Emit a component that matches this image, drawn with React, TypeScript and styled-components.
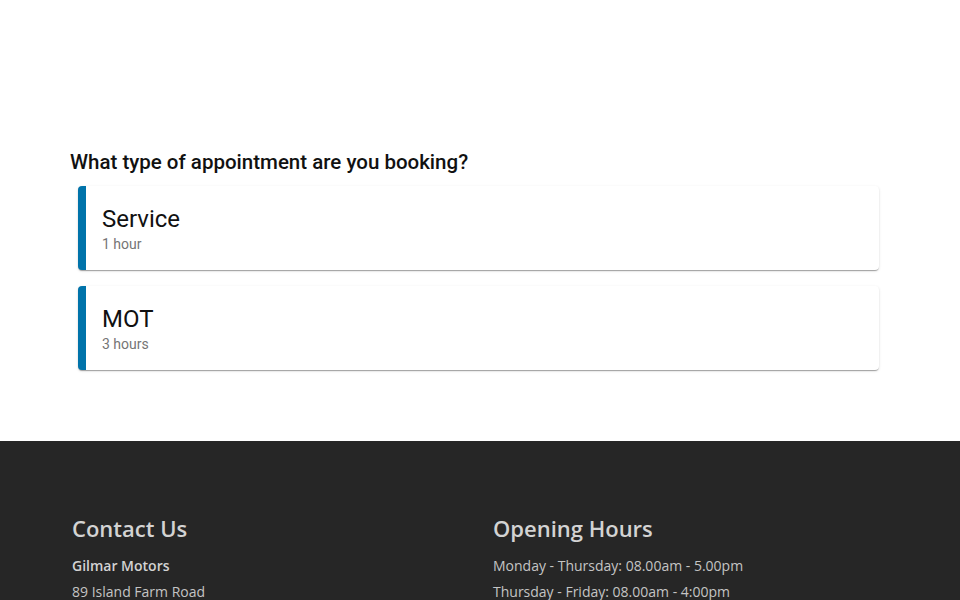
import React from "react";
import styled, { createGlobalStyle } from "styled-components";

const Global = createGlobalStyle`
  html, body { margin: 0; padding: 0; background: #fff; }
  body { font-family: Roboto, "Liberation Sans", sans-serif; }
  * { box-sizing: border-box; }
`;

const Page = styled.div`
  display: flex;
  flex-direction: column;
  height: 600px;
  overflow: hidden;
`;

const Main = styled.main`
  padding: 150px 81px 71px 70px;
`;

const Question = styled.h2`
  margin: 0 0 12px;
  font-family: Roboto, "Liberation Sans", sans-serif;
  font-weight: 500;
  font-size: 20.5px;
  line-height: 24px;
  color: #111;
`;

const List = styled.div`
  display: flex;
  flex-direction: column;
  gap: 16px;
  padding-left: 8px;
`;

const Card = styled.button`
  display: flex;
  flex-direction: column;
  align-items: flex-start;
  height: 84px;
  width: 100%;
  padding: 19px 16px 0 16px;
  border: none;
  border-left: 8px solid #0073aa;
  border-radius: 4px;
  background: #fff;
  text-align: left;
  cursor: pointer;
  box-shadow: 0 2px 1px -1px rgba(0, 0, 0, 0.2), 0 1px 1px 0 rgba(0, 0, 0, 0.14),
    0 1px 3px 0 rgba(0, 0, 0, 0.12);
  font-family: Roboto, "Liberation Sans", sans-serif;
`;

const CardTitle = styled.span`
  font-size: 24px;
  line-height: 28px;
  color: #111;
`;

const CardMeta = styled.span`
  margin-top: 1px;
  font-size: 14px;
  line-height: 20px;
  color: #757575;
`;

const Footer = styled.footer`
  flex: 1;
  background: #262626;
  padding: 72px 0 0 72px;
  display: grid;
  grid-template-columns: 421px 421px;
  align-content: start;
`;

const Column = styled.div`
  display: flex;
  flex-direction: column;
  font-family: "Open Sans", "Liberation Sans", sans-serif;
`;

const FooterHeading = styled.h4`
  margin: 0 0 10px;
  font-size: 22px;
  font-weight: 600;
  line-height: 30px;
  color: #d3d3d3;
`;

const Line = styled.p<{ $bold?: boolean }>`
  margin: 0;
  font-size: 14px;
  line-height: 26px;
  font-weight: ${(p) => (p.$bold ? 600 : 400)};
  color: ${(p) => (p.$bold ? "#d3d3d3" : "#c4c4c4")};
`;

const types = [
  { name: "Service", duration: "1 hour" },
  { name: "MOT", duration: "3 hours" },
];

export default function App() {
  return (
    <Page>
      <Global />
      <Main>
        <Question>What type of appointment are you booking?</Question>
        <List>
          {types.map((t) => (
            <Card key={t.name}>
              <CardTitle>{t.name}</CardTitle>
              <CardMeta>{t.duration}</CardMeta>
            </Card>
          ))}
        </List>
      </Main>
      <Footer>
        <Column>
          <FooterHeading>Contact Us</FooterHeading>
          <Line $bold>Gilmar Motors</Line>
          <Line>89 Island Farm Road</Line>
        </Column>
        <Column>
          <FooterHeading>Opening Hours</FooterHeading>
          <Line>Monday - Thursday: 08.00am - 5.00pm</Line>
          <Line>Thursday - Friday: 08.00am - 4:00pm</Line>
        </Column>
      </Footer>
    </Page>
  );
}
